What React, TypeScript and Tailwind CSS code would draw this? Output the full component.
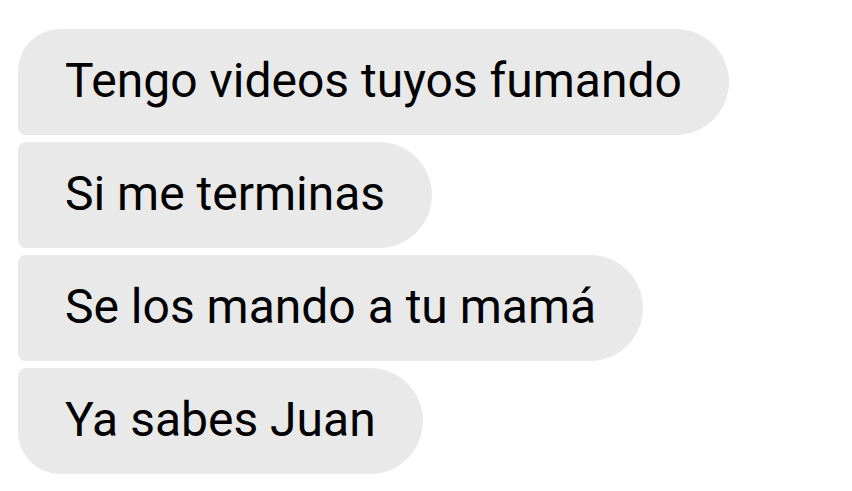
const MESSAGES = [
  { text: 'Tengo videos tuyos fumando', corners: 'rounded-tl-[42px] rounded-bl-[8px]' },
  { text: 'Si me terminas', corners: 'rounded-tl-[8px] rounded-bl-[8px]' },
  { text: 'Se los mando a tu mamá', corners: 'rounded-tl-[8px] rounded-bl-[8px]' },
  { text: 'Ya sabes Juan', corners: 'rounded-tl-[8px] rounded-bl-[42px]' },
] as const;

export default function App() {
  return (
    <div className="w-[852px] h-[491px] bg-white overflow-hidden pt-[29px] pl-[18px] font-['Roboto',sans-serif]">
      <div className="flex flex-col items-start gap-[7px]">
        {MESSAGES.map((m) => (
          <div
            key={m.text}
            className={`h-[106px] flex items-center px-[47px] bg-[#e9e9e9] text-black text-[48px] leading-none rounded-r-[53px] ${m.corners}`}
          >
            <span className="pb-[3px]">{m.text}</span>
          </div>
        ))}
      </div>
    </div>
  );
}
